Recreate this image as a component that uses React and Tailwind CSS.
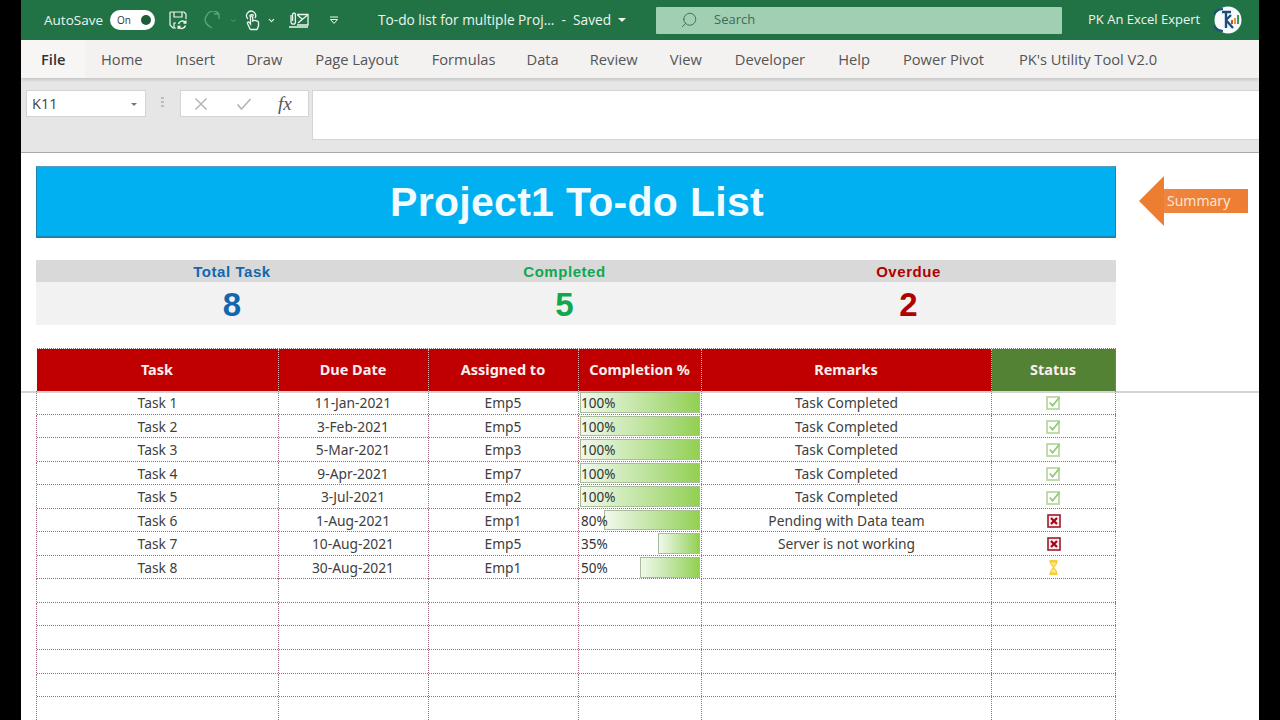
import React from "react";
import { Search, ChevronDown } from "lucide-react";

const SANS = "font-['Open_Sans','Noto_Sans',sans-serif]";
const CELL = "font-['Noto_Sans','Open_Sans',sans-serif]";
const COLS = "grid grid-cols-[242px_150px_150px_123px_290px_124px]";
const DOT = "border-dotted border-[#a8687a]";
const tabs = [
  ["Home", "ml-[16px]"], ["Insert", "ml-[33px]"], ["Draw", "ml-[31px]"], ["Page Layout", "ml-[33px]"], ["Formulas", "ml-[33px]"],
  ["Data", "ml-[31px]"], ["Review", "ml-[31px]"], ["View", "ml-[32px]"], ["Developer", "ml-[33px]"], ["Help", "ml-[33px]"],
  ["Power Pivot", "ml-[33px]"], ["PK's Utility Tool V2.0", "ml-[35px]"],
];
const rows = [
  ["Task 1", "11-Jan-2021", "Emp5", 100, "Task Completed", "ok"],
  ["Task 2", "3-Feb-2021", "Emp5", 100, "Task Completed", "ok"],
  ["Task 3", "5-Mar-2021", "Emp3", 100, "Task Completed", "ok"],
  ["Task 4", "9-Apr-2021", "Emp7", 100, "Task Completed", "ok"],
  ["Task 5", "3-Jul-2021", "Emp2", 100, "Task Completed", "ok"],
  ["Task 6", "1-Aug-2021", "Emp1", 80, "Pending with Data team", "bad"],
  ["Task 7", "10-Aug-2021", "Emp5", 35, "Server is not working", "bad"],
  ["Task 8", "30-Aug-2021", "Emp1", 50, "", "wait"],
  ...Array.from({ length: 6 }, () => ["", "", "", null, "", ""]),
];

function StatusIcon({ kind }) {
  if (kind === "ok")
    return (
      <svg width="15" height="15" viewBox="0 0 15 15">
        <rect x="1" y="2" width="12" height="12" fill="#fff" stroke="#b5d69c" strokeWidth="1.7" />
        <path d="M3.8 7.5 L6.6 10.6 L13.5 2.2" fill="none" stroke="#92c973" strokeWidth="1.7" />
      </svg>
    );
  if (kind === "bad")
    return (
      <svg width="14" height="14" viewBox="0 0 14 14">
        <rect x="1" y="1" width="12" height="12" fill="#f8ecec" stroke="#a11a2c" strokeWidth="1.6" />
        <path d="M4 4 L10 10 M10 4 L4 10" stroke="#a80018" strokeWidth="2.2" />
      </svg>
    );
  if (kind === "wait")
    return (
      <svg width="11" height="15" viewBox="0 0 11 15">
        <path d="M1.5 1 H9.5 M1.5 14 H9.5" stroke="#f2cf3a" strokeWidth="1.8" />
        <path d="M2.5 2 H8.5 V3.5 L5.5 7.5 L8.5 11.5 V13 H2.5 V11.5 L5.5 7.5 L2.5 3.5 Z" fill="#fbe88e" stroke="#f2cf3a" strokeWidth="1.1" />
      </svg>
    );
  return null;
}

function Bar({ value }) {
  if (value === null) return null;
  return (
    <div className="relative h-full w-full p-[1px]">
      <div className="flex h-full justify-end">
        <div
          className="h-full border border-[#a9bd9a] bg-gradient-to-r from-[#f1f8ec] to-[#92d050]"
          style={{ width: `${value}%` }}
        />
      </div>
      <span className="absolute left-[2px] top-[2px] text-[13.5px] leading-[20px] text-[#333]">{value}%</span>
    </div>
  );
}

export default function App() {
  return (
    <div className={`flex h-[720px] w-[1280px] overflow-hidden bg-black ${SANS}`}>
      <div className="relative ml-[21px] flex h-full w-[1238px] flex-col overflow-hidden bg-white">
        {/* Title bar */}
        <div className="flex h-[40px] shrink-0 items-center bg-[#217346] text-[13.5px] text-[#eef5f0]">
          <span className="ml-[23px] w-[60px] whitespace-nowrap">AutoSave</span>
          <div className="ml-[6px] flex h-[20px] w-[45px] items-center justify-between rounded-full bg-white pl-[7px] pr-[4px]">
            <span className="text-[10px] leading-none text-[#333]">On</span>
            <span className="h-[10px] w-[10px] rounded-full bg-[#1e5c3a]" />
          </div>
          <svg className="ml-[13px] shrink-0" width="20" height="20" viewBox="0 0 20 20" fill="none" stroke="#eef5f0" strokeWidth="1.2">
            <path d="M2 2 H16 L18 4 V9 M2 2 V15 L5 18 H8" />
            <path d="M6 2 V7 H14 V2 M6 18 V13 H8" />
            <path d="M10.5 14 A4 4 0 0 1 17.5 12.5 M17.5 15.5 A4 4 0 0 1 10.5 17" strokeWidth="1.4" />
            <path d="M17.8 10.5 V13 H15.4 M10.2 19 V16.5 H12.6" strokeWidth="1.4" />
          </svg>
          <svg className="ml-[15px] shrink-0" width="18" height="18" viewBox="0 0 18 18" fill="none" stroke="#5aa37b" strokeWidth="1.4">
            <path d="M11 3 L16 3 M16 3 L16 8 M16 3 A7 7 0 0 0 4 4 A7 7 0 0 0 6 15 L9 17" />
          </svg>
          <ChevronDown className="ml-[8px] shrink-0" size={9} color="#5aa37b" />
          <svg className="ml-[6px] shrink-0" width="18" height="22" viewBox="0 0 18 22" fill="none" stroke="#eef5f0" strokeWidth="1.3">
            <path d="M6 20 L3.5 14.5 C3 13 4.6 12.5 5.5 13.6 L6.5 15 V8 C6.5 6.6 8.7 6.6 8.7 8 V12 C10 11 13.5 11.5 14.5 13 V17 L13 20.5 H7 Z" />
            <path d="M4 10 A4.5 4.5 0 1 1 11 9" />
            <path d="M5.5 7.5 A2.5 2.5 0 0 1 9.8 6.5" />
          </svg>
          <ChevronDown className="ml-[5px] shrink-0" size={9} strokeWidth={3} color="#eef5f0" />
          <svg className="ml-[12px] shrink-0" width="21" height="20" viewBox="0 0 21 20" fill="none" stroke="#eef5f0" strokeWidth="1.3">
            <path d="M3 5 V12 A2.2 2.2 0 0 0 7.4 12 V4 A1.5 1.5 0 0 0 4.6 4 V11" />
            <path d="M9 4.5 H20 V15 H9" />
            <path d="M10 13 L19.5 5 M9.5 5 L14 9" />
            <path d="M1 17 H20" strokeWidth="1.5" />
          </svg>
          <svg className="ml-[20px] shrink-0" width="10" height="10" viewBox="0 0 10 10" fill="none" stroke="#eef5f0" strokeWidth="1">
            <path d="M1 2 H9" />
            <path d="M1.5 4.5 H8.5 L5 8.5 Z" />
          </svg>
          <span className="ml-[39px] w-[233px] whitespace-nowrap text-[13.7px]">To-do list for multiple Proj...&nbsp; -&nbsp; Saved</span>
          <span className="ml-[7px] h-0 w-0 shrink-0 border-x-[4px] border-t-[4px] border-x-transparent border-t-[#eef5f0]" />
          <div className="ml-[30px] flex h-[27px] w-[406px] shrink-0 items-center rounded-[1px] bg-[#a0cfb4] text-[#3e6b52]">
            <Search className="ml-[24px] -scale-x-100" size={18} strokeWidth={1.2} />
            <span className="ml-[16px] text-[13px]">Search</span>
          </div>
          <span className="ml-[26px] w-[113px] whitespace-nowrap text-[13px]">PK An Excel Expert</span>
          <svg className="ml-[13px] shrink-0" width="28" height="28" viewBox="0 0 28 28">
            <circle cx="14" cy="14" r="13.5" fill="#f7fbfd" />
            <path d="M9 3 A11 11 0 0 0 9 25" stroke="#1d4f7c" strokeWidth="2.2" fill="none" />
            <path d="M8 6 H17 M12 6 V22 M12 14 L19 22 M12 14 L17 9" stroke="#1d4f7c" strokeWidth="2.4" fill="none" />
            <rect x="17" y="14" width="2" height="4" fill="#d94a38" />
            <rect x="20" y="12" width="2" height="6" fill="#e0a030" />
            <rect x="23" y="9" width="2" height="9" fill="#3d9a50" />
          </svg>
        </div>

        {/* Ribbon tabs */}
        <div className="relative z-10 flex h-[38px] shrink-0 items-center bg-[#f3f2f1] text-[14.7px] text-[#555] shadow-[0_2px_3px_rgba(0,0,0,0.14)]">
          <div className="flex h-full w-[64px] items-center bg-[#f7f6f5] pl-[20px] font-semibold text-[#333]">File</div>
          {tabs.map(([t, m]) => (
            <span key={t} className={`${m} whitespace-nowrap`}>{t}</span>
          ))}
        </div>

        {/* Formula bar */}
        <div className="flex h-[75px] shrink-0 items-start border-b border-[#a9a9a9] bg-[#e6e6e6] pt-[12px]">
          <div className="ml-[5px] flex h-[27px] w-[120px] items-center justify-between border border-[#d4d4d4] bg-white pl-[5px] pr-[8px] pt-[1px] text-[14.5px] text-[#444]">
            K11
            <span className="h-0 w-0 border-x-[3px] border-t-[3px] border-x-transparent border-t-[#777]" />
          </div>
          <div className="ml-[15px] mt-[7px] flex w-[3px] flex-col gap-[2px]">
            <span className="h-[2px] w-[3px] bg-[#bdbdbd]" />
            <span className="h-[2px] w-[3px] bg-[#bdbdbd]" />
            <span className="h-[2px] w-[3px] bg-[#bdbdbd]" />
          </div>
          <div className="ml-[16px] flex h-[27px] w-[129px] items-center border border-[#d4d4d4] bg-white text-[#aaa]">
            <svg className="ml-[13px]" width="14" height="14" viewBox="0 0 14 14" fill="none" stroke="#b5b5b5" strokeWidth="1.5">
              <path d="M1.5 1.5 L12.5 12.5 M12.5 1.5 L1.5 12.5" />
            </svg>
            <svg className="ml-[28px]" width="16" height="14" viewBox="0 0 16 14" fill="none" stroke="#b5b5b5" strokeWidth="1.6">
              <path d="M1.5 7.5 L5.5 12 L14.5 2" />
            </svg>
            <span className="ml-[26px] font-['Liberation_Serif',serif] text-[19px] italic leading-none text-[#555]">fx</span>
          </div>
          <div className="ml-[3px] h-[50px] flex-1 border border-[#d4d4d4] border-r-0 bg-white" />
        </div>

        {/* Sheet */}
        <div className={`relative flex-1 pl-[15px] pt-[13px] ${CELL}`}>
          <div className="absolute left-0 right-0 top-[238px] h-[2px] bg-[#d4d4d4]" />
          <div className="flex items-start">
            <div className="flex h-[72px] w-[1080px] items-center justify-center border border-b-2 border-[#1b84ab] border-t-[#5b9fc0] bg-[#00b0f0] pl-[2px] pt-[2px] font-['Liberation_Sans',sans-serif]">
              <span className="text-[41px] font-bold leading-none tracking-[0.3px] text-[#f2fbff]">Project1 To-do List</span>
            </div>
            <div className="ml-[23px] mt-[10px] flex h-[50px] items-center">
              <span className="h-0 w-0 border-y-[25px] border-r-[25px] border-y-transparent border-r-[#ed7d31]" />
              <div className="flex h-[24px] w-[84px] items-center bg-gradient-to-r from-[#ee8540] to-[#ed7d31] pb-[2px] pl-[3px] text-[14px] text-[#fbe4d0]">Summary</div>
            </div>
          </div>

          <div className="mt-[22px] w-[1080px] font-['Liberation_Sans',sans-serif] font-bold">
            <div className="grid h-[22px] grid-cols-[392px_273px_415px] items-center bg-[#d9d9d9] pt-[1px] text-center text-[15px] leading-none tracking-[0.55px]">
              <span className="text-[#1068b0]">Total Task</span>
              <span className="text-[#10a84f]">Completed</span>
              <span className="text-[#b00000]">Overdue</span>
            </div>
            <div className="grid h-[43px] grid-cols-[392px_273px_415px] items-center bg-[#f2f2f2] pt-[2px] text-center text-[33px] leading-none">
              <span className="text-[#1068b0]">8</span>
              <span className="text-[#10a84f]">5</span>
              <span className="text-[#b00000]">2</span>
            </div>
          </div>

          <div className="relative z-10 ml-[1px] mt-[23px] w-[1079px]">
            <div className={`${COLS} h-[43px] border-t border-dotted border-[#a56a6a] text-[14.5px] font-bold text-[#fbeeee]`}>
              {["Task", "Due Date", "Assigned to", "Completion %", "Remarks"].map((h) => (
                <div key={h} className="flex items-center justify-center border-r border-dotted border-[#e6b0b0] bg-[#c00000] pr-[1px]">{h}</div>
              ))}
              <div className="flex items-center justify-center border-r border-dotted border-[#8a8a6a] bg-[#548235] pr-[1px]">Status</div>
            </div>
            {rows.map((r, i) => (
              <div key={i} className={`${COLS} h-[23.55px] border-b ${DOT} text-[13.8px] text-[#404040]`}>
                <div className={`-ml-[1px] flex items-center justify-center border-x pt-[2px] ${DOT}`}>{r[0]}</div>
                <div className={`flex items-center justify-center border-r pt-[2px] pr-[1px] ${DOT}`}>{r[1]}</div>
                <div className={`flex items-center justify-center border-r pt-[2px] pr-[1px] ${DOT}`}>{r[2]}</div>
                <div className={`border-r ${DOT}`}><Bar value={r[3]} /></div>
                <div className={`flex items-center justify-center border-r pt-[2px] ${DOT}`}>{r[4]}</div>
                <div className={`flex items-center justify-center border-r pt-[1px] ${DOT}`}><StatusIcon kind={r[5]} /></div>
              </div>
            ))}
          </div>
        </div>
      </div>
    </div>
  );
}
